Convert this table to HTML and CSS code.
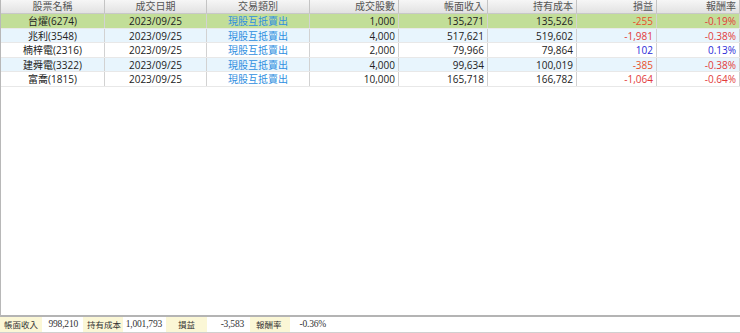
FILE: index.html
```html
<!DOCTYPE html>
<html lang="zh-Hant">
<head>
<meta charset="utf-8">
<link rel="stylesheet" href="styles.css">
</head>
<body>
<div class="app">
  <div class="grid-area">
    <div class="table">
      <div class="row head">
        <div class="c ctr">股票名稱</div>
        <div class="c ctr">成交日期</div>
        <div class="c ctr">交易類別</div>
        <div class="c num">成交股數</div>
        <div class="c num">帳面收入</div>
        <div class="c num">持有成本</div>
        <div class="c num">損益</div>
        <div class="c num">報酬率</div>
      </div>
      <div class="row sel">
        <div class="c ctr">台燿(6274)</div>
        <div class="c ctr">2023/09/25</div>
        <div class="c ctr type">現股互抵賣出</div>
        <div class="c num">1,000</div>
        <div class="c num">135,271</div>
        <div class="c num">135,526</div>
        <div class="c num neg1">-255</div>
        <div class="c num neg">-0.19%</div>
      </div>
      <div class="row alt">
        <div class="c ctr">兆利(3548)</div>
        <div class="c ctr">2023/09/25</div>
        <div class="c ctr type">現股互抵賣出</div>
        <div class="c num">4,000</div>
        <div class="c num">517,621</div>
        <div class="c num">519,602</div>
        <div class="c num neg">-1,981</div>
        <div class="c num neg">-0.38%</div>
      </div>
      <div class="row">
        <div class="c ctr">楠梓電(2316)</div>
        <div class="c ctr">2023/09/25</div>
        <div class="c ctr type">現股互抵賣出</div>
        <div class="c num">2,000</div>
        <div class="c num">79,966</div>
        <div class="c num">79,864</div>
        <div class="c num pos">102</div>
        <div class="c num pos">0.13%</div>
      </div>
      <div class="row alt">
        <div class="c ctr">建舜電(3322)</div>
        <div class="c ctr">2023/09/25</div>
        <div class="c ctr type">現股互抵賣出</div>
        <div class="c num">4,000</div>
        <div class="c num">99,634</div>
        <div class="c num">100,019</div>
        <div class="c num neg1">-385</div>
        <div class="c num neg">-0.38%</div>
      </div>
      <div class="row">
        <div class="c ctr">富喬(1815)</div>
        <div class="c ctr">2023/09/25</div>
        <div class="c ctr type">現股互抵賣出</div>
        <div class="c num">10,000</div>
        <div class="c num">165,718</div>
        <div class="c num">166,782</div>
        <div class="c num neg">-1,064</div>
        <div class="c num neg">-0.64%</div>
      </div>
    </div>
  </div>
  <div class="footer">
    <div class="lbl l1">帳面收入</div>
    <div class="val v1">998,210</div>
    <div class="lbl l2">持有成本</div>
    <div class="val v2">1,001,793</div>
    <div class="lbl l3">損益</div>
    <div class="val v3">-3,583</div>
    <div class="lbl l4">報酬率</div>
    <div class="val v4">-0.36%</div>
  </div>
</div>
</body>
</html>
```
FILE: styles.css
```css
html, body {
  margin: 0;
  padding: 0;
  background: #ffffff;
}
body {
  font-family: "Open Sans", "Noto Sans CJK TC", sans-serif;
  font-size: 10px;
  color: #222;
}
.app {
  width: 740px;
  height: 333px;
  display: flex;
  flex-direction: column;
  overflow: hidden;
}
.grid-area {
  flex: 1;
  border-left: 1px solid #b8b8b8;
  border-bottom: 2px solid #b4b4b4;
  background: #fff;
}
.table {
  display: flex;
  flex-direction: column;
}
.row {
  display: grid;
  grid-template-columns: 104px 102px 103px 89px 89px 89px 80px 83px;
  height: 14.6px;
  border-bottom: 1px solid #e8e8e8;
  box-sizing: border-box;
  background: #fff;
}
.row.head {
  height: 14px;
  background: linear-gradient(#f6f6f6, #e2e2e2);
  border-bottom: 1px solid #c8c8c8;
  color: #555;
}
.row.sel { background: #c2de98; }
.row.alt { background: #e8f5fd; }
.c {
  border-right: 1px solid #d2d2d2;
  line-height: 14px;
  white-space: nowrap;
  overflow: hidden;
  padding: 0 3px;
}
.head .c { line-height: 13px; border-right-color: #c4c4c4; }
.ctr { text-align: center; }
.num { text-align: right; }
.type { color: #2e8ee0; }
.neg { color: #e23b3b; }
.neg1 { color: #e8502a; }
.pos { color: #2a2ad8; }
.footer {
  height: 15px;
  display: flex;
  align-items: stretch;
  border-bottom: 1px solid #d0d0d0;
  font-family: "Liberation Serif", "Noto Sans CJK TC", serif;
  font-size: 9.5px;
  color: #333;
  line-height: 15px;
  letter-spacing: -0.2px;
}
.lbl {
  background: #fbf7d6;
  font-family: "Noto Sans CJK TC", sans-serif;
  font-size: 8.5px;
  box-sizing: border-box;
  white-space: nowrap;
  letter-spacing: 0;
}
.val {
  text-align: right;
  box-sizing: border-box;
  white-space: nowrap;
}
.l1 { width: 42px; padding-left: 4px; }
.v1 { width: 41px; padding-right: 5px; }
.l2 { width: 40px; padding-left: 4px; }
.v2 { width: 43px; padding-right: 4px; }
.l3 { width: 41px; text-align: center; }
.v3 { width: 43px; padding-right: 6px; }
.l4 { width: 40px; padding-left: 6px; }
.v4 { width: 39px; padding-right: 3px; }
```
